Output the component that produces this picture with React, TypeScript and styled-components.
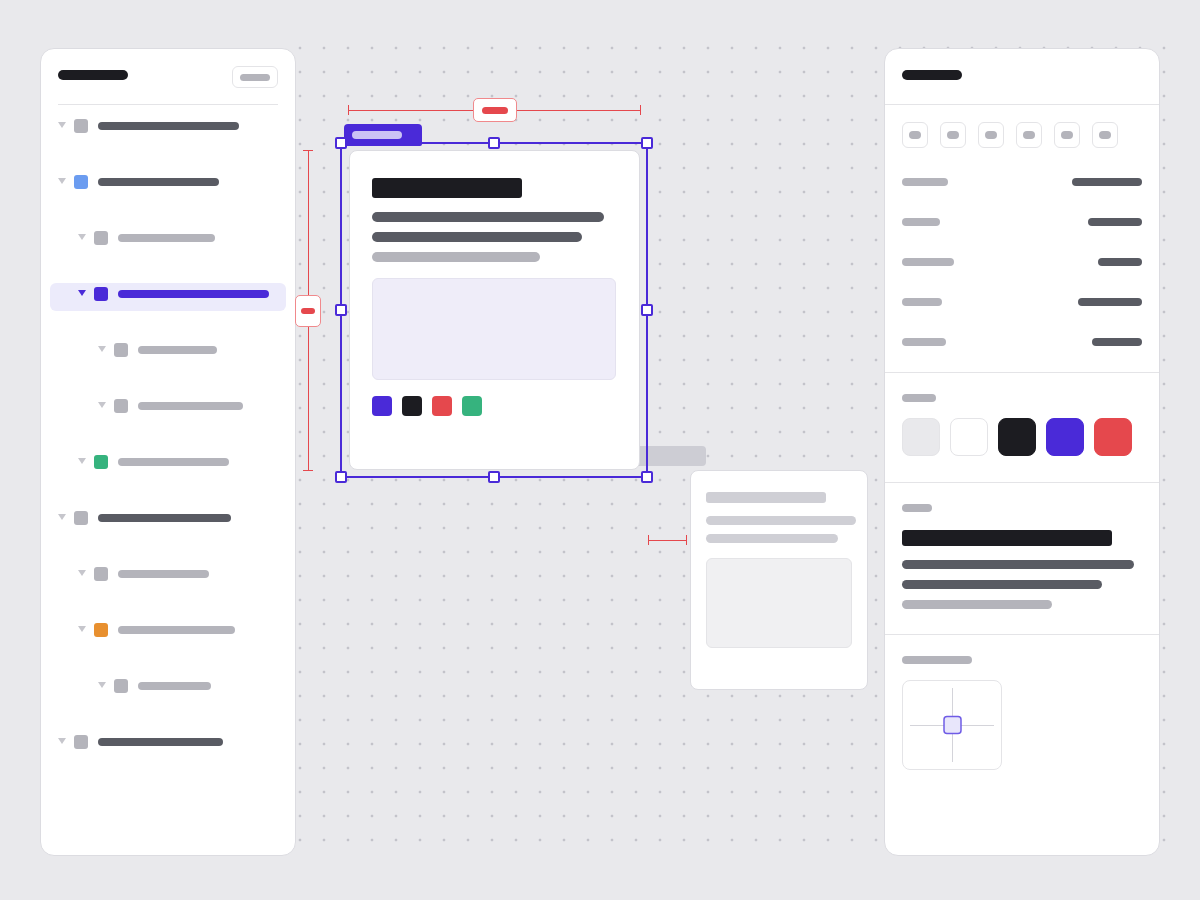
import styled, { createGlobalStyle } from 'styled-components';

const ink = '#1c1c21';
const slate = '#595b63';
const mist = '#b4b4bb';
const edge = '#dcdce1';
const hair = '#e4e4e7';
const accent = '#4a2ad8';
const red = '#e5484d';

const tones = {
  ink,
  slate,
  mist,
  pale: '#cfcfd5',
  accent,
  lilac: '#cbc3f5',
  red,
};
type Tone = keyof typeof tones;

const GlobalStyle = createGlobalStyle`
  html, body { margin: 0; height: 100%; }
  body {
    background: #e9e9ec;
    font-family: Inter, "Liberation Sans", sans-serif;
  }
  * { box-sizing: border-box; }
`;

const Bar = styled.div<{ $w: number; $h?: number; $tone: Tone }>`
  flex-shrink: 0;
  width: ${(p) => p.$w}px;
  height: ${(p) => p.$h ?? 8}px;
  border-radius: ${(p) => ((p.$h ?? 8) <= 10 ? (p.$h ?? 8) / 2 : 3)}px;
  background: ${(p) => tones[p.$tone]};
`;

const Workspace = styled.div`
  position: relative;
  display: flex;
  height: 900px;
  padding: 48px 40px 44px;
  &::before {
    content: '';
    position: absolute;
    left: 288px;
    top: 36px;
    width: 888px;
    height: 816px;
    background-image: radial-gradient(circle at 12px 12px, #c3c3ca 1.1px, transparent 1.7px);
    background-size: 24px 24px;
  }
`;

const Panel = styled.aside<{ $w: number }>`
  position: relative;
  z-index: 1;
  flex-shrink: 0;
  width: ${(p) => p.$w}px;
  display: flex;
  flex-direction: column;
  background: #fff;
  border: 1px solid ${edge};
  border-radius: 14px;
  overflow: hidden;
`;

/* ---------- layers panel ---------- */

const LayersHeader = styled.header`
  display: flex;
  justify-content: space-between;
  align-items: flex-start;
  margin: 0 17px;
  padding: 17px 0 16px;
  border-bottom: 1px solid ${hair};
  > ${Bar} {
    margin-top: 4px;
  }
`;

const GhostButton = styled.div`
  width: 46px;
  height: 22px;
  display: flex;
  align-items: center;
  justify-content: center;
  border: 1px solid ${hair};
  border-radius: 6px;
`;

const Tree = styled.div`
  display: flex;
  flex-direction: column;
  gap: 28px;
  padding: 10px 9px;
`;

const TreeRow = styled.div<{ $level: number; $active?: boolean }>`
  height: 28px;
  display: flex;
  align-items: center;
  padding: 4px 8px 10px ${(p) => 8 + p.$level * 20}px;
  border-radius: 6px;
  background: ${(p) => (p.$active ? '#ecebfb' : 'transparent')};
`;

const Caret = styled.span<{ $active?: boolean }>`
  width: 0;
  height: 0;
  margin: 0 8px 2px 0;
  border-left: 4px solid transparent;
  border-right: 4px solid transparent;
  border-top: 6px solid ${(p) => (p.$active ? accent : '#c6c6cc')};
`;

const LayerIcon = styled.span<{ $color: string }>`
  width: 14px;
  height: 14px;
  margin-right: 10px;
  border-radius: 3px;
  background: ${(p) => p.$color};
`;

type Layer = { level: number; color: string; w: number; tone: Tone; active?: boolean };

const layers: Layer[] = [
  { level: 0, color: mist, w: 141, tone: 'slate' },
  { level: 0, color: '#6b9cf0', w: 121, tone: 'slate' },
  { level: 1, color: mist, w: 97, tone: 'mist' },
  { level: 1, color: accent, w: 151, tone: 'accent', active: true },
  { level: 2, color: mist, w: 79, tone: 'mist' },
  { level: 2, color: mist, w: 105, tone: 'mist' },
  { level: 1, color: '#36b37e', w: 111, tone: 'mist' },
  { level: 0, color: mist, w: 133, tone: 'slate' },
  { level: 1, color: mist, w: 91, tone: 'mist' },
  { level: 1, color: '#e8902f', w: 117, tone: 'mist' },
  { level: 2, color: mist, w: 73, tone: 'mist' },
  { level: 0, color: mist, w: 125, tone: 'slate' },
];

/* ---------- canvas ---------- */

const Canvas = styled.main`
  position: relative;
  z-index: 2;
  flex: 1;
`;

const HMeasure = styled.div<{ $x: number; $y: number; $w: number }>`
  position: absolute;
  left: ${(p) => p.$x}px;
  top: ${(p) => p.$y}px;
  width: ${(p) => p.$w}px;
  display: flex;
  align-items: center;
`;

const VMeasure = styled.div<{ $x: number; $y: number; $h: number }>`
  position: absolute;
  left: ${(p) => p.$x}px;
  top: ${(p) => p.$y}px;
  height: ${(p) => p.$h}px;
  display: flex;
  flex-direction: column;
  align-items: center;
`;

const Tick = styled.span<{ $vertical?: boolean }>`
  flex-shrink: 0;
  width: ${(p) => (p.$vertical ? 10 : 1)}px;
  height: ${(p) => (p.$vertical ? 1 : 10)}px;
  background: ${red};
`;

const Rule = styled.span<{ $vertical?: boolean }>`
  flex: 1;
  ${(p) => (p.$vertical ? 'width: 1px;' : 'height: 1px;')}
  background: ${red};
`;

const MeasureLabel = styled.div<{ $w: number; $h: number }>`
  flex-shrink: 0;
  width: ${(p) => p.$w}px;
  height: ${(p) => p.$h}px;
  display: flex;
  align-items: center;
  justify-content: center;
  background: #fff;
  border: 1px solid #f0898c;
  border-radius: 5px;
`;

const GhostBlock = styled.div`
  position: absolute;
  left: 304px;
  top: 398px;
  width: 106px;
  height: 20px;
  border-radius: 4px;
  background: #cdcdd4;
`;

const Selection = styled.div`
  position: absolute;
  left: 44px;
  top: 94px;
  width: 308px;
  height: 336px;
  padding: 6px 6px 6px 7px;
  border: 2px solid ${accent};
`;

const FrameTag = styled.div`
  position: absolute;
  left: 2px;
  top: -20px;
  width: 78px;
  height: 22px;
  padding: 7px 0 0 8px;
  background: ${accent};
  border-radius: 4px 4px 2px 2px;
`;

const Handle = styled.span<{ $x: string; $y: string }>`
  position: absolute;
  z-index: 1;
  left: ${(p) => p.$x};
  top: ${(p) => p.$y};
  width: 12px;
  height: 12px;
  transform: translate(-50%, -50%);
  background: #fff;
  border: 2px solid ${accent};
  border-radius: 2px;
`;

const Card = styled.div`
  width: 100%;
  height: 100%;
  display: flex;
  flex-direction: column;
  align-items: flex-start;
  padding: 27px 23px 0 22px;
  background: #fff;
  border: 1px solid ${edge};
  border-radius: 8px;
`;

const Media = styled.div<{ $w: number; $h: number; $bg: string; $border: string }>`
  width: ${(p) => p.$w}px;
  height: ${(p) => p.$h}px;
  background: ${(p) => p.$bg};
  border: 1px solid ${(p) => p.$border};
  border-radius: 6px;
`;

const Dots = styled.div`
  display: flex;
  gap: 10px;
  margin-top: 16px;
`;

const Dot = styled.span<{ $color: string }>`
  width: 20px;
  height: 20px;
  border-radius: 4px;
  background: ${(p) => p.$color};
`;

const SideCard = styled.div`
  position: absolute;
  left: 394px;
  top: 422px;
  width: 178px;
  height: 220px;
  display: flex;
  flex-direction: column;
  align-items: flex-start;
  padding: 21px 15px;
  background: #fff;
  border: 1px solid ${edge};
  border-radius: 8px;
`;

const Gap = styled.div<{ $h: number }>`
  flex-shrink: 0;
  height: ${(p) => p.$h}px;
`;

/* ---------- inspector ---------- */

const InspectorHeader = styled.header`
  height: 56px;
  padding: 21px 17px 0;
  border-bottom: 1px solid ${hair};
`;

const Section = styled.section<{ $pt: number; $pb: number; $last?: boolean }>`
  display: flex;
  flex-direction: column;
  align-items: flex-start;
  padding: ${(p) => p.$pt}px 17px ${(p) => p.$pb}px;
  border-bottom: ${(p) => (p.$last ? 'none' : `1px solid ${hair}`)};
`;

const ToolRow = styled.div`
  display: flex;
  gap: 12px;
`;

const ToolButton = styled.div`
  width: 26px;
  height: 26px;
  display: flex;
  align-items: center;
  justify-content: center;
  border: 1px solid ${hair};
  border-radius: 6px;
`;

const PropList = styled.div`
  align-self: stretch;
  margin-top: 14px;
`;

const PropRow = styled.div`
  height: 40px;
  display: flex;
  align-items: center;
  justify-content: space-between;
`;

const Swatches = styled.div`
  display: flex;
  gap: 10px;
`;

const Swatch = styled.span<{ $color: string; $outlined?: boolean }>`
  width: 38px;
  height: 38px;
  border-radius: 8px;
  background: ${(p) => p.$color};
  border: 1px solid ${(p) => (p.$outlined ? hair : p.$color)};
`;

const Pad = styled.div`
  width: 100px;
  height: 90px;
  border: 1px solid ${hair};
  border-radius: 8px;
  overflow: hidden;
`;

const props: [number, number][] = [
  [46, 70],
  [38, 54],
  [52, 44],
  [40, 64],
  [44, 50],
];

const handles: [string, string][] = [
  ['-1px', '-1px'],
  ['50%', '-1px'],
  ['calc(100% + 1px)', '-1px'],
  ['-1px', '50%'],
  ['calc(100% + 1px)', '50%'],
  ['-1px', 'calc(100% + 1px)'],
  ['50%', 'calc(100% + 1px)'],
  ['calc(100% + 1px)', 'calc(100% + 1px)'],
];

function PositionPad() {
  return (
    <Pad>
      <svg width="98" height="88" viewBox="0 0 98 88">
        <line x1="49.5" y1="7" x2="49.5" y2="81" stroke="#d4d4da" strokeWidth="1" />
        <line x1="7" y1="44.5" x2="91" y2="44.5" stroke="#d4d4da" strokeWidth="1" />
        <rect x="41" y="35.5" width="17" height="17" rx="3" fill="#e8e6fb" stroke="#6f5ce6" strokeWidth="1.5" />
      </svg>
    </Pad>
  );
}

export default function App() {
  return (
    <>
      <GlobalStyle />
      <Workspace>
        <Panel $w={256}>
          <LayersHeader>
            <Bar $w={70} $h={10} $tone="ink" />
            <GhostButton>
              <Bar $w={30} $h={7} $tone="mist" />
            </GhostButton>
          </LayersHeader>
          <Tree>
            {layers.map((l, i) => (
              <TreeRow key={i} $level={l.level} $active={l.active}>
                <Caret $active={l.active} />
                <LayerIcon $color={l.color} />
                <Bar $w={l.w} $tone={l.tone} />
              </TreeRow>
            ))}
          </Tree>
        </Panel>

        <Canvas>
          <HMeasure $x={52} $y={50} $w={293}>
            <Tick />
            <Rule />
            <MeasureLabel $w={44} $h={24}>
              <Bar $w={26} $h={7} $tone="red" />
            </MeasureLabel>
            <Rule />
            <Tick />
          </HMeasure>

          <VMeasure $x={-1} $y={102} $h={321}>
            <Tick $vertical />
            <Rule $vertical />
            <MeasureLabel $w={26} $h={32}>
              <Bar $w={14} $h={6} $tone="red" />
            </MeasureLabel>
            <Rule $vertical />
            <Tick $vertical />
          </VMeasure>

          <GhostBlock />

          <Selection>
            <FrameTag>
              <Bar $w={50} $h={8} $tone="lilac" />
            </FrameTag>
            {handles.map(([x, y], i) => (
              <Handle key={i} $x={x} $y={y} />
            ))}
            <Card>
              <Bar $w={150} $h={20} $tone="ink" />
              <Gap $h={14} />
              <Bar $w={232} $h={10} $tone="slate" />
              <Gap $h={10} />
              <Bar $w={210} $h={10} $tone="slate" />
              <Gap $h={10} />
              <Bar $w={168} $h={10} $tone="mist" />
              <Gap $h={16} />
              <Media $w={244} $h={102} $bg="#efedf9" $border="#e4e2ef" />
              <Dots>
                <Dot $color={accent} />
                <Dot $color={ink} />
                <Dot $color={red} />
                <Dot $color="#36b37e" />
              </Dots>
            </Card>
          </Selection>

          <HMeasure $x={352} $y={487} $w={39}>
            <Tick />
            <Rule />
            <Tick />
          </HMeasure>

          <SideCard>
            <Bar $w={120} $h={11} $tone="pale" />
            <Gap $h={13} />
            <Bar $w={150} $h={9} $tone="pale" />
            <Gap $h={9} />
            <Bar $w={132} $h={9} $tone="pale" />
            <Gap $h={15} />
            <Media $w={146} $h={90} $bg="#f0f0f2" $border={hair} />
          </SideCard>
        </Canvas>

        <Panel $w={276}>
          <InspectorHeader>
            <Bar $w={60} $h={10} $tone="ink" />
          </InspectorHeader>

          <Section $pt={17} $pb={10}>
            <ToolRow>
              {Array.from({ length: 6 }, (_, i) => (
                <ToolButton key={i}>
                  <Bar $w={12} $h={8} $tone="mist" />
                </ToolButton>
              ))}
            </ToolRow>
            <PropList>
              {props.map(([a, b], i) => (
                <PropRow key={i}>
                  <Bar $w={a} $tone="mist" />
                  <Bar $w={b} $tone="slate" />
                </PropRow>
              ))}
            </PropList>
          </Section>

          <Section $pt={21} $pb={26}>
            <Bar $w={34} $tone="mist" />
            <Gap $h={16} />
            <Swatches>
              <Swatch $color="#e9e9ec" $outlined />
              <Swatch $color="#fff" $outlined />
              <Swatch $color={ink} />
              <Swatch $color={accent} />
              <Swatch $color={red} />
            </Swatches>
          </Section>

          <Section $pt={21} $pb={25}>
            <Bar $w={30} $tone="mist" />
            <Gap $h={18} />
            <Bar $w={210} $h={16} $tone="ink" />
            <Gap $h={14} />
            <Bar $w={232} $h={9} $tone="slate" />
            <Gap $h={11} />
            <Bar $w={200} $h={9} $tone="slate" />
            <Gap $h={11} />
            <Bar $w={150} $h={9} $tone="mist" />
          </Section>

          <Section $pt={21} $pb={0} $last>
            <Bar $w={70} $tone="mist" />
            <Gap $h={16} />
            <PositionPad />
          </Section>
        </Panel>
      </Workspace>
    </>
  );
}
